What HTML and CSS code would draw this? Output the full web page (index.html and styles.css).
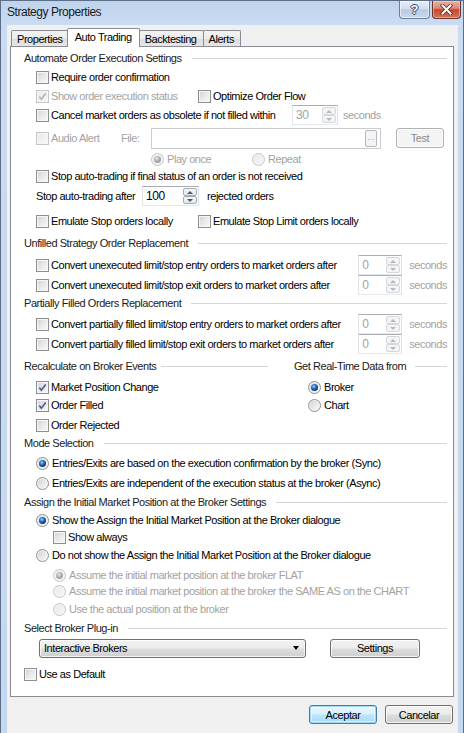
FILE: index.html
```html
<!DOCTYPE html>
<html>
<head>
<meta charset="utf-8">
<title>Strategy Properties</title>
<link rel="stylesheet" href="styles.css">
</head>
<body>
<div class="window">
  <div class="titlebar">
    <span class="title">Strategy Properties</span>
    <div class="caption-btns">
      <span class="cap-btn help">?</span>
      <span class="cap-btn close">
        <svg width="13" height="11" viewBox="0 0 13 11"><path d="M2.5 1.5 L10.5 9.5 M10.5 1.5 L2.5 9.5" stroke="#5a2a22" stroke-width="3.6" stroke-linecap="square"/><path d="M2.5 1.5 L10.5 9.5 M10.5 1.5 L2.5 9.5" stroke="#ffffff" stroke-width="2" stroke-linecap="square"/></svg>
      </span>
    </div>
  </div>

  <div class="client">
    <div class="tabs">
      <span class="tab">Properties</span>
      <span class="tab active">Auto Trading</span>
      <span class="tab">Backtesting</span>
      <span class="tab">Alerts</span>
    </div>

    <div class="panel">
      <div class="hdr sp3"><span>Automate Order Execution Settings</span></div>

      <div class="row ind sp3">
        <span class="opt"><span class="cb"></span>Require order confirmation</span>
      </div>
      <div class="row ind sp3">
        <span class="opt off col1"><span class="cb off"><svg viewBox="0 0 11 11"><path d="M2.3 5.6 L4.4 8.2 L8.7 2.4"/></svg></span>Show order execution status</span>
        <span class="opt"><span class="cb"></span>Optimize Order Flow</span>
      </div>
      <div class="row ind sp7">
        <span class="opt lbl-cancel"><span class="cb"></span>Cancel market orders as obsolete if not filled within</span>
        <span class="spin mid off"><span class="spin-val">30</span><span class="spin-btns"><span class="up"></span><span class="down"></span></span></span>
        <span class="unit off">seconds</span>
      </div>
      <div class="row ind sp5">
        <span class="opt off lbl-audio"><span class="cb off"></span>Audio Alert</span>
        <span class="lbl-file off">File:</span>
        <span class="file-field"><span class="browse">...</span></span>
        <span class="btn small off">Test</span>
      </div>
      <div class="row play sp1">
        <span class="opt off col-play"><span class="rb on off"></span>Play once</span>
        <span class="opt off"><span class="rb off"></span>Repeat</span>
      </div>
      <div class="row ind sp4">
        <span class="opt"><span class="cb"></span>Stop auto-trading if final status of an order is not received</span>
      </div>
      <div class="row ind sp9">
        <span class="lbl-after">Stop auto-trading after</span>
        <span class="spin wide"><span class="spin-val">100</span><span class="spin-btns"><span class="up"></span><span class="down"></span></span></span>
        <span class="unit gap8">rejected orders</span>
      </div>
      <div class="row ind sp6">
        <span class="opt col1"><span class="cb"></span>Emulate Stop orders locally</span>
        <span class="opt"><span class="cb"></span>Emulate Stop Limit orders locally</span>
      </div>

      <div class="hdr sp6"><span>Unfilled Strategy Order Replacement</span></div>
      <div class="row ind sp4">
        <span class="opt grow"><span class="cb"></span>Convert unexecuted limit/stop entry orders to market orders after</span>
        <span class="spin off"><span class="spin-val">0</span><span class="spin-btns"><span class="up"></span><span class="down"></span></span></span>
        <span class="unit off">seconds</span>
      </div>
      <div class="row ind sp2">
        <span class="opt grow"><span class="cb"></span>Convert unexecuted limit/stop exit orders to market orders after</span>
        <span class="spin off"><span class="spin-val">0</span><span class="spin-btns"><span class="up"></span><span class="down"></span></span></span>
        <span class="unit off">seconds</span>
      </div>

      <div class="hdr sp5"><span>Partially Filled Orders Replacement</span></div>
      <div class="row ind sp4">
        <span class="opt grow"><span class="cb"></span>Convert partially filled limit/stop entry orders to market orders after</span>
        <span class="spin off"><span class="spin-val">0</span><span class="spin-btns"><span class="up"></span><span class="down"></span></span></span>
        <span class="unit off">seconds</span>
      </div>
      <div class="row ind sp6">
        <span class="opt grow"><span class="cb"></span>Convert partially filled limit/stop exit orders to market orders after</span>
        <span class="spin off"><span class="spin-val">0</span><span class="spin-btns"><span class="up"></span><span class="down"></span></span></span>
        <span class="unit off">seconds</span>
      </div>

      <div class="hdr-split sp5">
        <div class="hdr hdr-left"><span>Recalculate on Broker Events</span></div>
        <div class="hdr hdr-right"><span>Get Real-Time Data from</span></div>
      </div>
      <div class="recalc">
        <div class="recalc-left">
          <div class="row sp2"><span class="opt"><span class="cb"><svg viewBox="0 0 11 11"><path d="M2.3 5.6 L4.4 8.2 L8.7 2.4"/></svg></span>Market Position Change</span></div>
          <div class="row sp4"><span class="opt"><span class="cb"><svg viewBox="0 0 11 11"><path d="M2.3 5.6 L4.4 8.2 L8.7 2.4"/></svg></span>Order Filled</span></div>
          <div class="row sp2"><span class="opt"><span class="cb"></span>Order Rejected</span></div>
        </div>
        <div class="recalc-right">
          <div class="row sp2"><span class="opt"><span class="rb on"></span>Broker</span></div>
          <div class="row"><span class="opt"><span class="rb"></span>Chart</span></div>
        </div>
      </div>

      <div class="hdr sp4"><span>Mode Selection</span></div>
      <div class="row ind sp4">
        <span class="opt"><span class="rb on"></span>Entries/Exits are based on the execution confirmation by the broker (Sync)</span>
      </div>
      <div class="row ind sp3">
        <span class="opt"><span class="rb"></span>Entries/Exits are independent of the execution status at the broker (Async)</span>
      </div>

      <div class="hdr sp2"><span>Assign the Initial Market Position at the Broker Settings</span></div>
      <div class="row ind sp1">
        <span class="opt"><span class="rb on"></span>Show the Assign the Initial Market Position at the Broker dialogue</span>
      </div>
      <div class="row ind2 sp2">
        <span class="opt"><span class="cb"></span>Show always</span>
      </div>
      <div class="row ind sp4">
        <span class="opt"><span class="rb"></span>Do not show the Assign the Initial Market Position at the Broker dialogue</span>
      </div>
      <div class="row ind2">
        <span class="opt off"><span class="rb on off"></span>Assume the initial market position at the broker FLAT</span>
      </div>
      <div class="row ind2 sp2">
        <span class="opt off"><span class="rb off"></span>Assume the initial market position at the broker the SAME AS on the CHART</span>
      </div>
      <div class="row ind2 sp3">
        <span class="opt off"><span class="rb off"></span>Use the actual position at the broker</span>
      </div>

      <div class="hdr sp4"><span>Select Broker Plug-in</span></div>
      <div class="row broker sp10">
        <span class="combo"><span class="combo-text">Interactive Brokers</span><span class="combo-arrow"></span></span>
        <span class="btn settings">Settings</span>
      </div>
      <div class="row">
        <span class="opt"><span class="cb"></span>Use as Default</span>
      </div>
    </div>

    <div class="dialog-btns">
      <span class="btn dlg default">Aceptar</span>
      <span class="btn dlg">Cancelar</span>
    </div>
  </div>
</div>
</body>
</html>
```

FILE: styles.css
```css
html, body {
  margin: 0;
  padding: 0;
}

body {
  font-family: "Liberation Sans", Arial, sans-serif;
  font-size: 11px;
  letter-spacing: -0.45px;
  color: #000;
  background: #c8dbf1;
}

/* ---------- window frame ---------- */
.window {
  width: 464px;
  height: 733px;
  box-sizing: border-box;
  border: 1px solid #5d6e86;
  border-bottom: none;
  background: linear-gradient(#bfd3ec, #c9dcf2 24px, #c7daf0 200px, #c4d8ef);
  display: flex;
  flex-direction: column;
  overflow: hidden;
}

.titlebar {
  height: 24px;
  flex: 0 0 24px;
  display: flex;
  align-items: flex-start;
  padding-left: 6px;
}

.title {
  font-size: 12px;
  line-height: 22px;
  color: #1a1a1a;
}

.caption-btns {
  margin-left: auto;
  margin-right: 2px;
  display: flex;
  gap: 2px;
}

.cap-btn {
  height: 18px;
  box-sizing: border-box;
  border-radius: 0 0 4px 4px;
  display: flex;
  align-items: center;
  justify-content: center;
}

.help {
  width: 31px;
  border: 1px solid #6c7d97;
  border-top: none;
  background: linear-gradient(#e6eef8, #d2dfef 45%, #b7cbe4 52%, #c9d9ee);
  box-shadow: inset 0 0 0 1px rgba(255, 255, 255, 0.55);
  font-size: 13px;
  font-weight: bold;
  letter-spacing: 0;
  color: #f6f8fb;
  text-shadow: -1px 0 #3f4c5f, 1px 0 #3f4c5f, 0 -1px #3f4c5f, 0 1px #3f4c5f;
}

.close {
  width: 29px;
  border: 1px solid #6b3329;
  border-top: none;
  background: linear-gradient(#eab0a3, #d98a76 42%, #c4482f 52%, #d6725a);
  box-shadow: inset 0 0 0 1px rgba(255, 225, 215, 0.45);
}

/* ---------- client area ---------- */
.client {
  flex: 1;
  margin: 0 5px 0 6px;
  padding: 3px 4px 0 3px;
  background: #f0f0f0;
  display: flex;
  flex-direction: column;
}

.tabs {
  height: 18px;
  display: flex;
  align-items: flex-end;
  padding-left: 1px;
  position: relative;
  z-index: 1;
}

.tab {
  height: 16px;
  box-sizing: border-box;
  padding: 0 6px 0 5px;
  border: 1px solid #898c95;
  border-bottom: none;
  margin-right: -1px;
  border-radius: 2px 2px 0 0;
  background: linear-gradient(#f3f3f3, #ebebeb 50%, #dedede 51%, #e6e6e6);
  line-height: 16px;
  color: #000;
}

.tab.active {
  height: 19px;
  margin: 0 -1px -1px -2px;
  padding: 0 7px;
  background: #fff;
  line-height: 16px;
  position: relative;
}

.panel {
  background: #fff;
  border: 1px solid #898c95;
  padding: 3px 6px 14px 13px;
}

/* ---------- rows ---------- */
.row {
  height: 16px;
  margin-bottom: 3px;
  display: flex;
  align-items: center;
  white-space: nowrap;
}

.hdr {
  height: 16px;
  margin-bottom: 3px;
  display: flex;
  align-items: center;
  white-space: nowrap;
  color: #1a1a1a;
}

.hdr::after {
  content: "";
  flex: 1;
  border-top: 1px solid #d5d5d5;
  margin-left: 10px;
}

.hdr-split {
  display: flex;
  height: 16px;
}

.hdr-split .hdr {
  margin-bottom: 0;
}

.hdr-left {
  width: 244px;
}

.hdr-left::after {
  margin-left: 5px;
}

.hdr-right {
  flex: 1;
  margin-left: 26px;
}

.hdr-right::after {
  margin-left: 9px;
}

/* row spacing (distance to the next line) */
.sp0 { margin-bottom: 0; }
.sp1 { margin-bottom: 1px; }
.sp2 { margin-bottom: 2px; }
.sp3 { margin-bottom: 3px; }
.sp4 { margin-bottom: 4px; }
.sp5 { margin-bottom: 5px; }
.sp6 { margin-bottom: 6px; }
.sp7 { margin-bottom: 7px; }
.sp9 { margin-bottom: 9px; }
.sp10 { margin-bottom: 10px; }
.row:not([class*="sp"]) { margin-bottom: 0; }

.ind { padding-left: 12px; }
.ind2 { padding-left: 29px; }
.play { padding-left: 127px; }
.broker { padding-left: 15px; }

.opt {
  display: flex;
  align-items: center;
}

.off {
  color: #a2a2a2;
}

.grow { flex: 1; }
.col1 { width: 162px; }
.col-play { width: 101px; }
.lbl-cancel { width: 256px; }
.lbl-audio { width: 85px; }
.lbl-file { width: 30px; }
.lbl-after { width: 106px; }
.unit { margin-left: 5px; }
.unit.gap8 { margin-left: 8px; }
.grow + .spin + .unit { margin-left: 7px; }

/* ---------- check box ---------- */
.cb {
  width: 13px;
  height: 13px;
  flex: 0 0 13px;
  box-sizing: border-box;
  margin-right: 2px;
  border: 1px solid #8e8f8f;
  background: linear-gradient(135deg, #cdd0d4 0%, #e6e7e9 45%, #fafafa 100%);
  box-shadow: inset 0 0 0 1px #f6f6f6;
  display: flex;
}

.cb svg {
  width: 11px;
  height: 11px;
}

.cb svg path {
  fill: none;
  stroke: #4b5f95;
  stroke-width: 1.7;
}

.cb.off {
  border-color: #c4c5c6;
  background: linear-gradient(135deg, #e8e9ea, #f7f7f7);
}

.cb.off svg path {
  stroke: #b4b4b4;
}

/* ---------- radio button ---------- */
.rb {
  width: 13px;
  height: 13px;
  flex: 0 0 13px;
  box-sizing: border-box;
  margin-right: 3px;
  border-radius: 50%;
  border: 1px solid #8e8f8f;
  background: linear-gradient(135deg, #c9ccd1 0%, #e4e5e8 45%, #fbfbfb 100%);
  box-shadow: inset 0 0 0 1px #f5f5f5;
  display: flex;
  align-items: center;
  justify-content: center;
}

.rb.on::after {
  content: "";
  width: 7px;
  height: 7px;
  border-radius: 50%;
  background: radial-gradient(circle at 40% 35%, #a9d6fb 0, #3e86d3 1.6px, #1f5aa6 3px, #183f78 3.5px);
}

.rb.off {
  border-color: #c4c5c6;
  background: linear-gradient(135deg, #e6e7e8, #f8f8f8);
}

.rb.on.off::after {
  background: radial-gradient(circle at 40% 35%, #e6e6e6 0, #bdbdbd 2px, #a3a3a3 3.5px);
}

/* ---------- spin box ---------- */
.spin {
  width: 44px;
  height: 20px;
  flex: 0 0 auto;
  box-sizing: border-box;
  border: 1px solid #abadb3;
  border-color: #abadb3 #dbdfe6 #e3e9ef #e2e3ea;
  background: #fff;
  display: flex;
}

.spin.mid { width: 46px; }
.spin.wide { width: 57px; }

.spin-val {
  flex: 1;
  padding-left: 3px;
  line-height: 18px;
  font-size: 12px;
}

.spin-btns {
  width: 15px;
  display: flex;
  flex-direction: column;
  padding: 1px 1px 1px 0;
  box-sizing: border-box;
}

.spin-btns span {
  flex: 1;
  box-sizing: border-box;
  border: 1px solid #a5acb5;
  border-radius: 2px;
  background: linear-gradient(#f4f5f7, #e4e7eb);
  display: flex;
  align-items: center;
  justify-content: center;
}

.spin-btns .up::after,
.spin-btns .down::after {
  content: "";
  border-left: 3px solid transparent;
  border-right: 3px solid transparent;
}

.spin-btns .up::after { border-bottom: 3px solid #4d5866; }
.spin-btns .down::after { border-top: 3px solid #4d5866; }

.spin.off .spin-btns span {
  border-color: #d4d7db;
  background: #f4f4f4;
}

.spin.off .spin-btns .up::after { border-bottom-color: #b5b9bf; }
.spin.off .spin-btns .down::after { border-top-color: #b5b9bf; }

/* ---------- file field ---------- */
.file-field {
  width: 230px;
  height: 21px;
  flex: 0 0 auto;
  box-sizing: border-box;
  border: 1px solid #c9cbcf;
  background: #fff;
  display: flex;
  align-items: center;
  justify-content: flex-end;
  padding-right: 3px;
}

.browse {
  width: 12px;
  height: 17px;
  box-sizing: border-box;
  border: 1px solid #b4b7bb;
  border-radius: 2px;
  background: #f4f4f4;
  color: #a7a7a7;
  font-size: 9px;
  letter-spacing: 0;
  text-align: center;
  line-height: 13px;
}

/* ---------- push buttons ---------- */
.btn {
  box-sizing: border-box;
  border: 1px solid #707070;
  border-radius: 3px;
  background: linear-gradient(#f2f2f2, #ebebeb 48%, #dddddd 52%, #cfcfcf);
  box-shadow: inset 0 0 0 1px rgba(255, 255, 255, 0.75);
  display: flex;
  align-items: center;
  justify-content: center;
  color: #000;
}

.btn.small {
  width: 48px;
  height: 20px;
  margin-left: 15px;
}

.btn.small.off {
  border-color: #adb2b5;
  background: #f4f4f4;
  color: #8a8a8a;
}

.btn.settings {
  width: 90px;
  height: 19px;
  margin-left: 24px;
}

.combo {
  width: 267px;
  height: 19px;
  box-sizing: border-box;
  border: 1px solid #707070;
  border-radius: 3px;
  background: linear-gradient(#f2f2f2, #ebebeb 48%, #dddddd 52%, #cfcfcf);
  box-shadow: inset 0 0 0 1px rgba(255, 255, 255, 0.75);
  display: flex;
  align-items: center;
  padding: 0 6px 0 4px;
}

.combo-text {
  flex: 1;
}

.combo-arrow {
  border-left: 3.5px solid transparent;
  border-right: 3.5px solid transparent;
  border-top: 4px solid #000;
}

/* ---------- recalculate block ---------- */
.recalc {
  display: flex;
  padding-left: 12px;
  margin-top: 5px;
}

.recalc-left {
  width: 272px;
}

.recalc-right {
  flex: 1;
}

/* ---------- dialog buttons ---------- */
.dialog-btns {
  display: flex;
  justify-content: flex-end;
  gap: 8px;
  margin-top: 8px;
  padding-right: 1px;
}

.btn.dlg {
  width: 68px;
  height: 19px;
}

.btn.default {
  border-color: #3c7fb1;
  background: linear-gradient(#eaf6fd, #d9f0fc 48%, #bee6fd 52%, #a7d9f5);
  box-shadow: inset 0 0 0 1px #9fd7f7, inset 0 0 0 2px rgba(255, 255, 255, 0.5);
}
```
